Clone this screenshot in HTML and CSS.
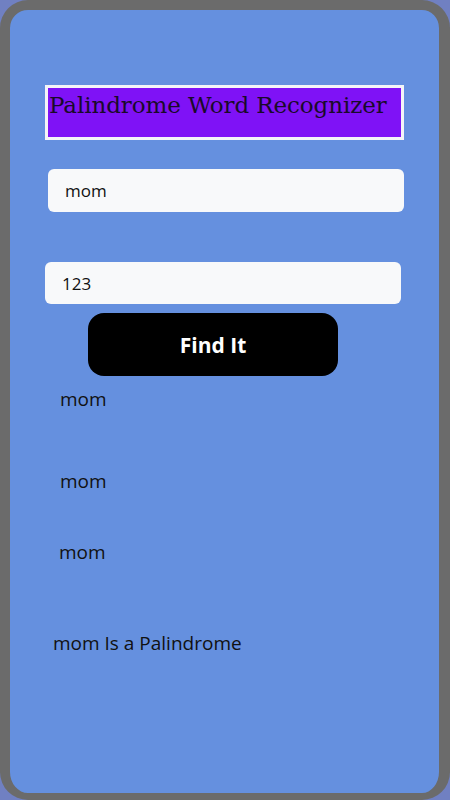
FILE: index.html
```html
<!DOCTYPE html>
<html>
<head>
<meta charset="utf-8">
<link rel="stylesheet" href="styles.css">
</head>
<body>
<div class="phone">
  <h1 class="title">Palindrome Word Recognizer</h1>
  <div class="field field-one">mom</div>
  <div class="field field-two">123</div>
  <button class="find">Find It</button>
  <p class="out out-one">mom</p>
  <p class="out out-two">mom</p>
  <p class="out out-three">mom</p>
  <p class="result">mom Is a Palindrome</p>
</div>
</body>
</html>
```
FILE: styles.css
```css
html, body {
  margin: 0;
  padding: 0;
  background: #7080c2;
}
.phone {
  box-sizing: border-box;
  width: 450px;
  height: 800px;
  border-style: solid;
  border-color: #6b6b6b;
  border-width: 10px 11px 7px 10px;
  border-radius: 28px;
  background: #6590df;
  padding-top: 75px;
  font-family: "Open Sans", "Noto Sans", sans-serif;
  color: #111;
  overflow: hidden;
}
.title {
  box-sizing: border-box;
  margin: 0 0 0 35px;
  width: 359px;
  height: 55px;
  border: 3px solid #f4f4f8;
  background: #7f12f6;
  font-family: "DejaVu Serif", serif;
  font-weight: normal;
  font-size: 23px;
  line-height: 34px;
  padding: 0 0 0 1px;
  color: #1a0a2a;
  white-space: nowrap;
  letter-spacing: -0.1px;
}
.field {
  box-sizing: border-box;
  width: 356px;
  height: 43px;
  background: #f8f9fa;
  border-radius: 6px;
  font-size: 17px;
  line-height: 44px;
  padding-left: 17px;
  color: #111;
}
.field-one {
  margin: 29px 0 0 38px;
}
.field-two {
  margin: 50px 0 0 35px;
  height: 42px;
  line-height: 44px;
}
.find {
  display: block;
  width: 250px;
  height: 63px;
  margin: 9px 0 0 78px;
  border: none;
  border-radius: 16px;
  background: #000;
  color: #fff;
  font-family: "Open Sans", "Noto Sans", sans-serif;
  font-weight: bold;
  font-size: 21px;
}
.out {
  margin: 0;
  font-size: 19px;
  line-height: 26px;
  padding-left: 50px;
}
.out-one {
  margin-top: 10px;
}
.out-two {
  margin-top: 56px;
}
.out-three {
  margin-top: 45px;
  padding-left: 49px;
}
.result {
  margin: 65px 0 0 43px;
  font-size: 19px;
  line-height: 26px;
}
```
